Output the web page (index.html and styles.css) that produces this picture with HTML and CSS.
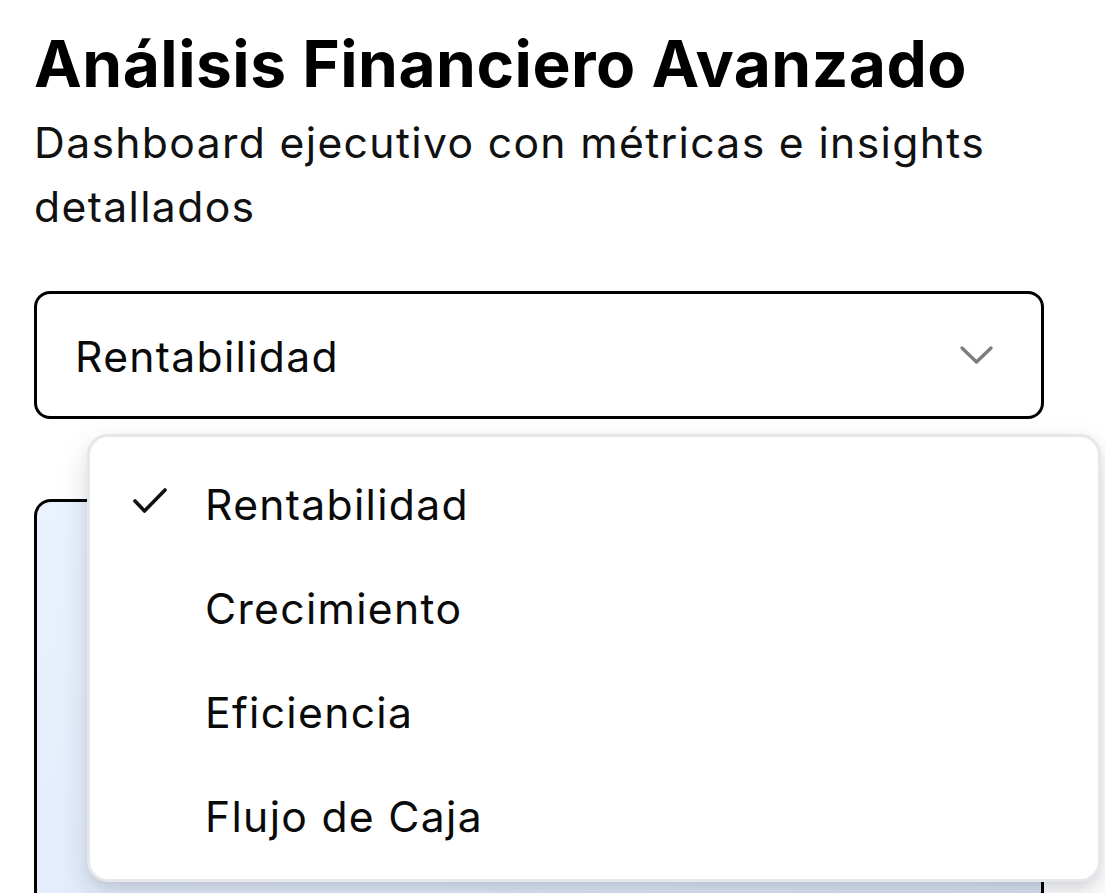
FILE: index.html
```html
<!DOCTYPE html>
<html lang="es">
<head>
<meta charset="utf-8">
<title>Análisis Financiero Avanzado</title>
<link rel="stylesheet" href="styles.css">
</head>
<body>
<main class="page">
  <header class="header">
    <h1 class="title">Análisis Financiero Avanzado</h1>
    <p class="subtitle">Dashboard ejecutivo con métricas e insights detallados</p>
  </header>

  <div class="select-wrap">
    <button class="select" type="button">
      <span class="select-value">Rentabilidad</span>
      <svg class="chevron" viewBox="0 0 40 24" width="40" height="24" aria-hidden="true">
        <polyline points="5,5 19.5,19 34,5" fill="none" stroke="#7d7d7d" stroke-width="3.4" stroke-linecap="round" stroke-linejoin="round"/>
      </svg>
    </button>

    <ul class="menu" role="listbox">
      <li class="item selected" role="option">
        <span class="check">
          <svg viewBox="0 0 36 28" width="36" height="28" aria-hidden="true">
            <polyline points="3,13 12.5,23 33,2" fill="none" stroke="#111" stroke-width="3.6" stroke-linecap="round" stroke-linejoin="round"/>
          </svg>
        </span>
        <span class="label">Rentabilidad</span>
      </li>
      <li class="item" role="option"><span class="check"></span><span class="label">Crecimiento</span></li>
      <li class="item" role="option"><span class="check"></span><span class="label">Eficiencia</span></li>
      <li class="item" role="option"><span class="check"></span><span class="label">Flujo de Caja</span></li>
    </ul>
  </div>

  <section class="card"></section>
</main>
</body>
</html>
```

FILE: styles.css
```css
* {
  box-sizing: border-box;
}

html, body {
  margin: 0;
  padding: 0;
  background: #ffffff;
}

body {
  font-family: Inter, "Noto Sans", "Liberation Sans", sans-serif;
  color: #0a0a0a;
  overflow: hidden;
}

.page {
  padding: 21px 61px 0 34px;
}

.header {
  display: flex;
  flex-direction: column;
}

.title {
  margin: 0;
  font-size: 64px;
  line-height: 85px;
  font-weight: 700;
  color: #000;
  letter-spacing: 0.5px;
}

.subtitle {
  margin: 5px 0 0;
  font-size: 42.67px;
  line-height: 64px;
  font-weight: 400;
  color: #111;
  letter-spacing: 1.35px;
}

.select-wrap {
  position: relative;
  margin-top: 52px;
}

.select {
  width: 100%;
  height: 128px;
  display: flex;
  align-items: center;
  justify-content: space-between;
  padding: 4px 44px 0 38px;
  border: 3px solid #000;
  border-radius: 16px;
  background: #fff;
  font-family: inherit;
  font-size: 42.67px;
  color: #0a0a0a;
  text-align: left;
  letter-spacing: 1.3px;
}

.select-value {
  line-height: 64px;
}

.chevron {
  display: block;
  flex: none;
  margin-top: -4px;
}

.menu {
  position: absolute;
  top: 143px;
  left: 53px;
  width: 1014px;
  z-index: 10;
  margin: 0;
  padding: 16px 0 10px;
  list-style: none;
  background: #fff;
  border: 3px solid #e5e7eb;
  border-radius: 21px;
  box-shadow: 0 12px 30px rgba(15, 23, 42, 0.14), 0 4px 10px rgba(15, 23, 42, 0.06);
}

.item {
  display: flex;
  align-items: center;
  height: 104px;
  padding-left: 42px;
  font-size: 42.67px;
  color: #0a0a0a;
  letter-spacing: 1.3px;
}

.check {
  width: 73px;
  flex: none;
  display: flex;
  align-items: center;
}

.check svg {
  display: block;
  margin-top: -6px;
}

.label {
  line-height: 64px;
}

.card {
  margin-top: 80px;
  height: 520px;
  border: 3px solid #000;
  border-radius: 17px;
  background: linear-gradient(160deg, #eaf2fe 0%, #e1ebfa 60%, #d6e1f2 100%);
}
```
